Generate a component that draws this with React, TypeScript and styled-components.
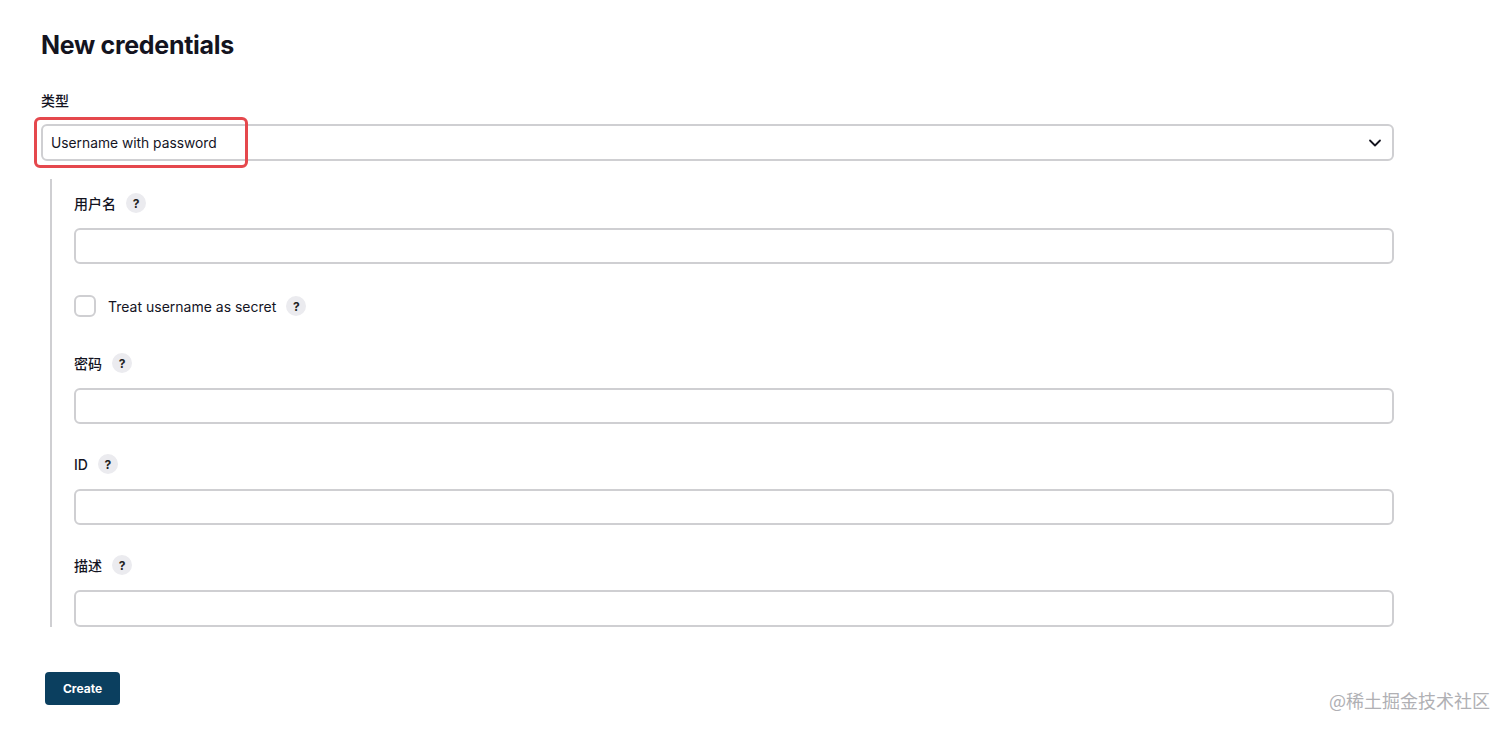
import React from 'react'
import styled, { createGlobalStyle } from 'styled-components'

const Global = createGlobalStyle`
  body {
    margin: 0;
    background: #ffffff;
    color: #14141f;
    font-family: Inter, "Noto Sans", "Noto Sans CJK SC", sans-serif;
  }
`

const Page = styled.main`
  position: relative;
  min-height: 732px;
  box-sizing: border-box;
  padding: 29px 118px 0 41px;
`

const Title = styled.h1`
  margin: 0 0 29px;
  font-size: 25px;
  line-height: 32px;
  font-weight: 700;
  letter-spacing: -0.3px;
`

const LabelRow = styled.div`
  display: flex;
  align-items: center;
  gap: 10px;
  height: 20px;
  margin-bottom: 15px;
  font-size: 14px;
  font-weight: 500;
`

const TypeLabel = styled(LabelRow)`
  margin-bottom: 14px;
`

const Help = styled.span`
  display: inline-flex;
  align-items: center;
  justify-content: center;
  width: 20px;
  height: 20px;
  border-radius: 50%;
  background: #ebebef;
  color: #222;
  font-size: 12px;
  font-weight: 700;
`

const SelectWrap = styled.div`
  position: relative;
  display: flex;
  align-items: center;
  justify-content: space-between;
  height: 37px;
  box-sizing: border-box;
  border: 2px solid #cfcfd2;
  border-radius: 6px;
  padding: 0 10px 0 8px;
  font-size: 13.8px;
`

const Highlight = styled.div`
  position: absolute;
  left: -9px;
  top: -9px;
  width: 214px;
  height: 51px;
  box-sizing: border-box;
  border: 3px solid #e5484d;
  border-radius: 6px;
  pointer-events: none;
`

const Section = styled.section`
  margin: 18px 0 0 9px;
  padding: 14px 0 0 22px;
  border-left: 2px solid #cfcfd2;
`

const Input = styled.div<{ $last?: boolean }>`
  height: ${p => (p.$last ? '37px' : '36px')};
  box-sizing: border-box;
  border: 2px solid #cfcfd2;
  border-radius: 6px;
  margin-bottom: ${p => (p.$last ? '0' : '30px')};
`

const CheckRow = styled.div`
  display: flex;
  align-items: center;
  height: 22px;
  margin: -1px 0 36px;
  font-size: 14px;
  font-weight: 400;
`

const Box = styled.span`
  width: 22px;
  height: 22px;
  box-sizing: border-box;
  border: 2px solid #cfcfd2;
  border-radius: 6px;
  margin-right: 12px;
`

const CheckHelp = styled(Help)`
  margin-left: 10px;
`

const Button = styled.button`
  margin: 45px 0 0 4px;
  width: 75px;
  height: 33px;
  border: none;
  border-radius: 4px;
  background: #0b3f5f;
  color: #ffffff;
  font-family: Inter, sans-serif;
  font-size: 12px;
  font-weight: 700;
`

const Watermark = styled.div`
  position: absolute;
  right: 22px;
  top: 687px;
  color: #b0b0b4;
  font-size: 18px;
  font-family: "Noto Sans CJK SC", sans-serif;
`

const Field = (props: { label: string; last?: boolean }) => (
  <>
    <LabelRow>
      {props.label}
      <Help>?</Help>
    </LabelRow>
    <Input $last={props.last} />
  </>
)

export default function App() {
  return (
    <Page>
      <Global />
      <Title>New credentials</Title>
      <TypeLabel>类型</TypeLabel>
      <SelectWrap>
        <span>Username with password</span>
        <svg width="14" height="14" viewBox="0 0 14 14" fill="none">
          <path d="M2 4.5 L7 9.5 L12 4.5" stroke="#14141f" strokeWidth="1.8" strokeLinecap="round" strokeLinejoin="round" />
        </svg>
        <Highlight />
      </SelectWrap>
      <Section>
        <LabelRow>
          用户名
          <Help>?</Help>
        </LabelRow>
        <Input style={{ marginBottom: 32 }} />
        <CheckRow>
          <Box />
          Treat username as secret
          <CheckHelp>?</CheckHelp>
        </CheckRow>
        <Field label="密码" />
        <Field label="ID" />
        <Field label="描述" last />
      </Section>
      <Button>Create</Button>
      <Watermark>@稀土掘金技术社区</Watermark>
    </Page>
  )
}
